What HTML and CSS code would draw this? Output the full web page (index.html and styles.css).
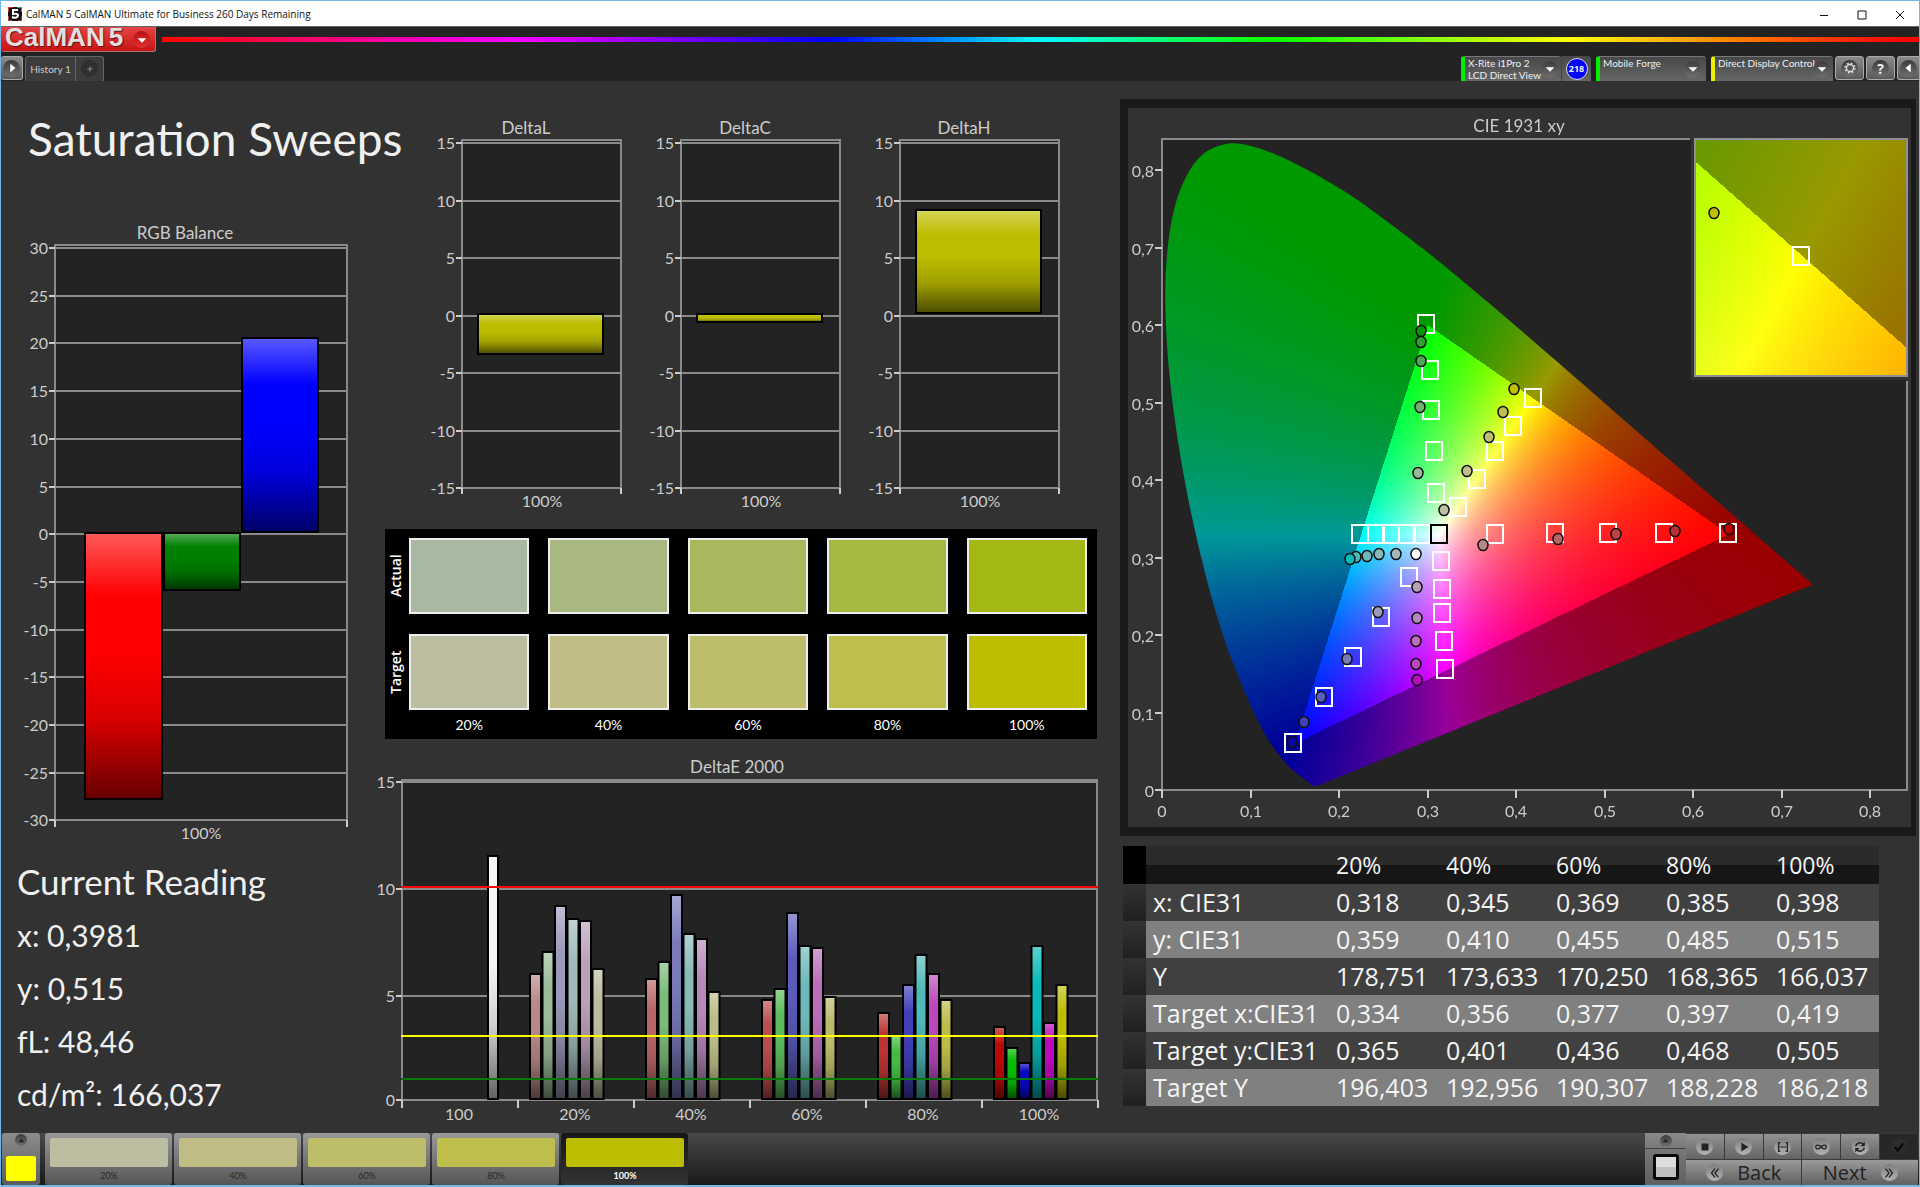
FILE: index.html
```
<!DOCTYPE html>
<html lang="en">
<head>
<meta charset="utf-8">
<title>CalMAN 5 CalMAN Ultimate for Business</title>
<link rel="stylesheet" href="styles.css">
</head>
<body>
<div class="window">
  <div class="titlebar">
    <svg class="app-icon" viewBox="0 0 14 14"><rect width="14" height="14" fill="#111"/><path d="M0 5V0h5" stroke="#c33" stroke-width="2" fill="none"/><path d="M0 9v5h4" stroke="#b44" stroke-width="2" fill="none"/><path d="M9 0h5v5" stroke="#3a5" stroke-width="2" fill="none"/><path d="M14 9v5h-4" stroke="#c22" stroke-width="2" fill="none"/><path d="M10 3H5v4c5-1 6 1 4 3-1 1-3 1-5 0" fill="none" stroke="#fff" stroke-width="2"/></svg>
    <span class="titlebar-text">CalMAN 5 CalMAN Ultimate for Business 260 Days Remaining</span>
    <div class="caption-buttons">
      <button aria-label="Minimize"><svg viewBox="0 0 12 12"><path d="M2 6.5h8"/></svg></button>
      <button aria-label="Maximize"><svg viewBox="0 0 12 12"><path d="M2 2h8v8H2z"/></svg></button>
      <button aria-label="Close"><svg viewBox="0 0 12 12"><path d="M2 2l8 8M10 2l-8 8"/></svg></button>
    </div>
  </div>

  <header class="header">
    <div class="brand-row">
      <button class="brand"><span>CalMAN</span><span>5</span><i class="knob knob-red"><svg viewBox="0 0 16 16"><path d="M3 6h10l-5 5z" fill="#fff"/></svg></i></button>
      <div class="rainbow"></div>
    </div>
    <div class="tab-row">
      <button class="key key-left" aria-label="Expand"><i class="knob"><svg viewBox="0 0 16 16"><path d="M6 3v10l6-5z" fill="#fff"/></svg></i></button>
      <nav class="tabs">
        <button class="tab">History 1</button>
        <button class="tab tab-add" aria-label="Add history"><i class="knob"><svg viewBox="0 0 16 16"><path d="M5 8h6M8 5v6" stroke="#999"/></svg></i></button>
      </nav>
      <div class="devices">
        <div class="device-group">
          <button class="device device-meter"><span>X-Rite i1Pro 2<br>LCD Direct View</span><i class="knob"><svg viewBox="0 0 16 16"><path d="M3 6h10l-5 5z" fill="#fff"/></svg></i></button>
          <div class="badge-cell"><span class="badge">218</span></div>
        </div>
        <button class="device device-source"><span>Mobile Forge</span><i class="knob"><svg viewBox="0 0 16 16"><path d="M3 6h10l-5 5z" fill="#fff"/></svg></i></button>
        <button class="device device-display"><span>Direct Display Control</span><i class="knob"><svg viewBox="0 0 16 16"><path d="M3 6h10l-5 5z" fill="#fff"/></svg></i></button>
        <div class="keys">
          <button class="key" aria-label="Settings"><i class="knob"><svg viewBox="0 0 16 16"><circle cx="8" cy="8" r="4" fill="none" stroke="#ddd" stroke-width="1.5"/><circle cx="8" cy="8" r="5.6" fill="none" stroke="#ddd" stroke-width="1.6" stroke-dasharray="2.2 2.2"/></svg></i></button>
          <button class="key key-help" aria-label="Help"><i class="knob">?</i></button>
          <button class="key key-right" aria-label="Collapse"><i class="knob"><svg viewBox="0 0 16 16"><path d="M10 3v10L4 8z" fill="#fff"/></svg></i></button>
        </div>
      </div>
    </div>
  </header>

  <main class="workspace">
    <section class="col-left">
      <h1>Saturation Sweeps</h1>
      <svg id="rgb-balance" class="chart" viewBox="1 225 369 629" role="img" aria-label="RGB Balance"></svg>
      <div class="reading">
        <h2>Current Reading</h2>
        <p>x: 0,3981</p>
        <p>y: 0,515</p>
        <p>fL: 48,46</p>
        <p>cd/m²: 166,037</p>
      </div>
    </section>

    <section class="col-mid">
      <svg id="delta-lch" class="chart" viewBox="370 81 740 448" role="img" aria-label="DeltaL, DeltaC and DeltaH"></svg>
      <div class="patches">
        <div class="sides"><span>Actual</span><span>Target</span></div>
        <div class="patch-grid">
          <b class="patch a20"></b><b class="patch a40"></b><b class="patch a60"></b><b class="patch a80"></b><b class="patch a100"></b>
          <b class="patch t20"></b><b class="patch t40"></b><b class="patch t60"></b><b class="patch t80"></b><b class="patch t100"></b>
        </div>
        <div class="levels"><span>20%</span><span>40%</span><span>60%</span><span>80%</span><span>100%</span></div>
      </div>
      <svg id="delta-e" class="chart" viewBox="370 739 740 394" role="img" aria-label="DeltaE 2000"></svg>
    </section>

    <section class="col-right">
      <figure class="cie">
        <canvas id="cie-colors" width="783" height="719"></canvas>
        <svg id="cie-plot" class="chart" viewBox="1128 108 783 719" role="img" aria-label="CIE 1931 xy"></svg>
      </figure>
      <table class="data">
        <thead><tr><th class="gutter"></th><th class="name"></th><th>20%</th><th>40%</th><th>60%</th><th>80%</th><th>100%</th></tr></thead>
        <tbody>
          <tr><td class="gutter"></td><td>x: CIE31</td><td>0,318</td><td>0,345</td><td>0,369</td><td>0,385</td><td>0,398</td></tr>
          <tr><td class="gutter"></td><td>y: CIE31</td><td>0,359</td><td>0,410</td><td>0,455</td><td>0,485</td><td>0,515</td></tr>
          <tr><td class="gutter"></td><td>Y</td><td>178,751</td><td>173,633</td><td>170,250</td><td>168,365</td><td>166,037</td></tr>
          <tr><td class="gutter"></td><td>Target x:CIE31</td><td>0,334</td><td>0,356</td><td>0,377</td><td>0,397</td><td>0,419</td></tr>
          <tr><td class="gutter"></td><td>Target y:CIE31</td><td>0,365</td><td>0,401</td><td>0,436</td><td>0,468</td><td>0,505</td></tr>
          <tr><td class="gutter"></td><td>Target Y</td><td>196,403</td><td>192,956</td><td>190,307</td><td>188,228</td><td>186,218</td></tr>
        </tbody>
      </table>
    </section>
  </main>

  <footer class="footer">
    <button class="current" aria-label="Current color"><i class="knob knob-small"><svg viewBox="0 0 16 16"><path d="M3 11h10L8 5z" fill="#222"/></svg></i><b></b></button>
    <div class="steps">
      <button class="step"><b class="t20"></b>20%</button>
      <button class="step"><b class="t40"></b>40%</button>
      <button class="step"><b class="t60"></b>60%</button>
      <button class="step"><b class="t80"></b>80%</button>
      <button class="step step-active"><b class="t100"></b>100%</button>
    </div>
    <div class="window-mode">
      <button aria-label="Show patterns"><i class="knob knob-small"><svg viewBox="0 0 16 16"><path d="M3 11h10L8 5z" fill="#222"/></svg></i></button>
      <button class="pattern" aria-label="Pattern"><b></b></button>
    </div>
    <div class="transport">
      <button aria-label="Stop"><i class="knob knob-light"><svg viewBox="0 0 16 16"><path d="M4 4h8v8H4z"/></svg></i></button>
      <button aria-label="Play"><i class="knob knob-light"><svg viewBox="0 0 16 16"><path d="M5 3v10l8-5z"/></svg></i></button>
      <button aria-label="Read series"><i class="knob knob-light"><svg viewBox="0 0 16 16"><path d="M5 3H3v10h2M11 3h2v10h-2M5 8h1.500M7.300 8h1.500M9.600 8h1.500" fill="none" stroke="#222" stroke-width="1.500"/></svg></i></button>
      <button aria-label="Read continuous"><i class="knob knob-light"><svg viewBox="0 0 16 16"><path d="M8 8C6 5.500 2 5 2 8S6 10.500 8 8s6-3 6 0S10 10.500 8 8z" fill="none" stroke="#222" stroke-width="1.500"/></svg></i></button>
      <button aria-label="Refresh"><i class="knob knob-light"><svg viewBox="0 0 16 16"><path d="M3 7c1-4 6-5 9-2M13 9c-1 4-6 5-9 2" fill="none" stroke="#222" stroke-width="1.800"/><path d="M13.500 2v5h-5zM2.500 14V9h5z"/></svg></i></button>
      <button class="off" aria-label="Accept"><i class="knob knob-dark"><svg viewBox="0 0 16 16"><path d="M3 8l3.500 4L13 4" fill="none" stroke="#0a0a0a" stroke-width="2.500"/></svg></i></button>
      <button class="step-nav"><i class="knob knob-light"><svg viewBox="0 0 16 16"><path d="M8 3L4 8l4 5M12 3L8 8l4 5" fill="none" stroke="#222" stroke-width="1.500"/></svg></i>Back</button>
      <button class="step-nav">Next<i class="knob knob-light"><svg viewBox="0 0 16 16"><path d="M4 3l4 5-4 5M8 3l4 5-4 5" fill="none" stroke="#222" stroke-width="1.500"/></svg></i></button>
    </div>
  </footer>
</div>
<script src="charts.js"></script>
</body>
</html>
```
FILE: styles.css
```
* { box-sizing: border-box; }

body {
  margin: 0;
  background: #323232;
  color: #f0f0f0;
  font-family: Lato, "Open Sans", sans-serif;
}

button {
  margin: 0;
  padding: 0;
  border: 0;
  background: none;
  color: inherit;
  font: inherit;
}

.window {
  display: flex;
  flex-direction: column;
  min-height: 100vh;
  border: 1px solid #6db9ea;
  border-bottom-width: 2px;
}

/* Title bar */
.titlebar {
  display: flex;
  align-items: center;
  gap: 4px;
  height: 25px;
  padding-left: 7px;
  background: #fff;
  color: #111;
  font: 10px/24px "Open Sans", sans-serif;
}
.app-icon { width: 14px; height: 14px; }
.caption-buttons { display: flex; margin-left: auto; }
.caption-buttons button { width: 38px; height: 25px; }
.caption-buttons svg { width: 12px; height: 12px; vertical-align: middle; fill: none; stroke: #111; }

/* Round button face shared by all glyph buttons */
.knob {
  display: inline-flex;
  align-items: center;
  justify-content: center;
  flex: none;
  width: 17px;
  height: 17px;
  border-radius: 50%;
  background: linear-gradient(#3c3c3c, #707070);
  font-style: normal;
}
.knob svg { width: 14px; height: 14px; }
.knob-red { background: linear-gradient(#b81212, #e03030); }
.knob-small { width: 12px; height: 12px; }
.knob-small svg { width: 9px; height: 9px; }
.knob-light { background: linear-gradient(#7c7c7c, #b4b4b4); fill: #222; }
.knob-dark { background: #2c2c2c; }

/* Header */
.header { background: #232323; }
.brand-row { display: flex; align-items: flex-start; gap: 6px; height: 30px; border-top: 1px solid #666; }
.brand {
  display: flex;
  align-items: center;
  gap: 4px;
  width: 155px;
  height: 25px;
  padding: 0 0 4px 4px;
  overflow: hidden;
  border: 1px solid #a77;
  border-width: 0 1px 1px 0;
  border-radius: 0 0 3px 3px;
  background: linear-gradient(#e34444, #c81414);
  color: #e0e0e0;
  font: bold 26px/20px "Liberation Sans", sans-serif;
  text-shadow: 1px 1px 1px #611;
}
.brand .knob { margin: 5px 0 0 6px; }
.rainbow {
  flex: 1;
  height: 5px;
  margin-top: 10px;
  background: linear-gradient(90deg, #f00, #f0f 20%, #00f 38%, #0ff 50%, #0f0 63%, #ff0 80%, #f00 99%);
}
.tab-row { display: flex; height: 25px; }
.tabs { display: flex; margin-left: 2px; border: 1px solid #666; border-bottom: 0; border-radius: 3px 3px 0 0; background: #3c3c3c; }
.tab { width: 49px; color: #ccc; font-size: 10px; }
.tab-add { width: 28px; border-left: 1px solid #666; }
.tab-add .knob { background: #303030; }
.key {
  display: flex;
  align-items: center;
  justify-content: center;
  width: 29px;
  height: 24px;
  border: 1px solid #aaa;
  border-radius: 3px;
  background: linear-gradient(#8a8a8a, #5a5a5a);
}
.key-left { width: 22px; border-left: 0; }
.key-right { width: 22px; border-right: 0; border-radius: 3px 0 0 3px; }
.key-help { font: bold 14px "Open Sans", sans-serif; }
.devices { display: flex; gap: 5px; margin-left: auto; }
.device-group { display: flex; }
.device {
  display: flex;
  align-items: center;
  justify-content: space-between;
  height: 25px;
  padding: 0 5px 0 3px;
  border-left: 4px solid #0e0;
  border-top: 1px solid #777;
  border-radius: 3px 3px 0 0;
  background: linear-gradient(#484848, #666);
  font-size: 10px;
  line-height: 12px;
  text-align: left;
  white-space: nowrap;
}
.device span { align-self: flex-start; }
.device-meter { width: 100px; padding-right: 6px; }
.device-source { width: 110px; }
.device-display { width: 122px; padding-right: 3px; border-left-color: #ee0; }
.device-display .knob { margin-left: -6px; }
.badge-cell { display: flex; align-items: center; justify-content: center; width: 30px; border-left: 1px solid #444; background: linear-gradient(#484848, #666); border-radius: 0 3px 0 0; }
.badge { width: 22px; height: 22px; border: 1px solid #ddd; border-radius: 50%; background: #00f; font: bold 9px/20px "Open Sans", sans-serif; text-align: center; }
.keys { display: flex; gap: 2px; margin-left: -3px; }

/* Workspace */
.workspace {
  display: grid;
  grid-template-columns: minmax(0, 369fr) minmax(0, 740fr) minmax(0, 809fr);
  flex: 1;
  align-items: start;
}
.chart { display: block; width: 100%; height: auto; font: 16px Lato, sans-serif; fill: #ccc; }
.chart .chart-title { font-size: 17px; }
.chart .end { text-anchor: end; }
.chart .mid { text-anchor: middle; }

h1 { margin: 26px 0 54px 27px; font-size: 46px; font-weight: 400; line-height: 64px; white-space: nowrap; }
.reading { padding-left: 16px; }
.reading h2, .reading p { margin: 0; font-weight: 400; }
.reading h2 { font-size: 35px; line-height: 55px; }
.reading p { font-size: 30px; line-height: 53px; }

.patches {
  display: grid;
  grid-template-columns: 20px minmax(0, 1fr);
  height: 210px;
  margin: 0 13px 0 15px;
  padding: 9px 10px 0 4px;
  background: #000;
  color: #fff;
}
.patch-grid, .sides { display: grid; grid-template-rows: 76px 76px; row-gap: 20px; }
.patch-grid, .levels { grid-column: 2; display: grid; grid-template-columns: repeat(5, minmax(0, 1fr)); column-gap: 19px; }
.sides span { width: 14px; writing-mode: vertical-rl; transform: rotate(180deg); text-align: center; font: 600 14px/14px "Open Sans", sans-serif; }
.levels { text-align: center; font-size: 14px; line-height: 24px; }
.patch { border: 2px solid #eee; }
.a20 { background: #a9b8a3; } .a40 { background: #a9b880; } .a60 { background: #a8b85c; } .a80 { background: #a6b83f; } .a100 { background: #a3b715; }
.t20 { background: #bdbda2; } .t40 { background: #bfbd85; } .t60 { background: #bebd6a; } .t80 { background: #bdbe4b; } .t100 { background: #bdbd00; }

.cie {
  display: grid;
  margin: 18px 3px 10px 10px;
  border: solid #1a1a1a;
  border-width: 9px 5px 9px 8px;
}
.cie > * { grid-area: 1 / 1; width: 100%; }

.data { width: 756px; max-width: 98%; margin-left: 13px; border-collapse: collapse; table-layout: fixed; color: #f4f4f4; font: 25px/36px "Open Sans", sans-serif; }
.data th, .data td { height: 37px; padding: 0 0 1px 7px; text-align: left; font-weight: 400; white-space: nowrap; }
.data th { height: 38px; font-size: 23px; }
.data thead tr { background: linear-gradient(#2b2b2b 50%, #161616 50%); }
.data tbody tr { background: #404040; }
.data tbody tr:nth-child(even) { background: #808080; }
.data .gutter { width: 23px; background: linear-gradient(#333, #202020); }
.data th.gutter { background: #000; }
.data .name { width: 183px; }

/* Footer */
.footer { display: flex; height: 52px; padding: 0 1px; background: linear-gradient(#484848, #1a1a1a); }
.current {
  display: flex;
  flex-direction: column;
  align-items: center;
  justify-content: space-between;
  width: 38px;
  padding: 1px 0 4px;
  border-radius: 3px;
  background: linear-gradient(#8c8c8c, #5c5c5c);
}
.current b { width: 30px; height: 25px; border-radius: 2px; background: #ff0; }
.steps { display: flex; gap: 2px; margin-left: 5px; }
.step {
  display: flex;
  flex-direction: column;
  width: 127px;
  padding: 5px 4px 0 5px;
  border-radius: 3px;
  background: linear-gradient(#999, #555);
  color: #2a2a2a;
  font-size: 9px;
  line-height: 18px;
}
.step b { height: 30px; border-radius: 2px; }
.step-active { background: linear-gradient(#161616, #333); color: #fff; font-weight: 700; }
.window-mode { display: flex; flex-direction: column; gap: 1px; width: 41px; margin-left: auto; background: #444; }
.window-mode button { display: flex; align-items: center; justify-content: center; height: 15px; background: linear-gradient(#8a8a8a, #787878); }
.window-mode .pattern { height: 36px; background: linear-gradient(#777, #606060); }
.pattern b { width: 26px; height: 26px; border: 3px solid #0a0a0a; border-radius: 3px; background: linear-gradient(#ddd 50%, #c0c0c0 50%); }
.transport { display: grid; grid-template-columns: repeat(6, 1fr); grid-template-rows: 25px 25px; gap: 1px; width: 232px; padding-top: 1px; background: #3a3a3a; }
.transport button { display: flex; align-items: center; justify-content: center; background: linear-gradient(#939393, #646464); }
.transport .off { background: #272727; }
.transport .step-nav { grid-column: span 3; gap: 14px; color: #222; font: 20px/24px "Open Sans", sans-serif; background: linear-gradient(#9a9a9a, #606060); }
```
FILE: charts.js
```
// Bar charts ---------------------------------------------------------------

const GLOSS = `<defs><linearGradient id="gloss" x1="0" y1="0" x2="0" y2="1">
  <stop offset="0" stop-color="#fff" stop-opacity=".35"/><stop offset=".24" stop-color="#fff" stop-opacity="0"/>
  <stop offset=".45" stop-color="#000" stop-opacity="0"/><stop offset=".7" stop-color="#000" stop-opacity=".15"/>
  <stop offset="1" stop-color="#000" stop-opacity=".6"/></linearGradient></defs>`;

const text = (x, y, s, cls) => `<text x="${x}" y="${y}" class="${cls}">${s}</text>`;
const line = (x1, y1, x2, y2, color, w = 2) =>
  `<path d="M${x1} ${y1}L${x2} ${y2}" stroke="${color}" stroke-width="${w}"/>`;
const rect = (x, y, w, h, attrs) => `<rect x="${x}" y="${y}" width="${w}" height="${h}" ${attrs}/>`;

function bar(x, y, w, h, color) {
  return rect(x, y, w, h, `fill="${color}"`) + rect(x, y, w, h, 'fill="url(#gloss)" stroke="#000" stroke-width="2"');
}

// Plot box with horizontal grid lines and value labels on the left.
function frame(left, right, top, bottom, rows) {
  let out = rect(left, top, right - left, bottom - top, 'fill="#232323" stroke="#8a8a8a" stroke-width="2"');
  rows.forEach(([value, y]) => {
    out += line(left, y, right, y, '#8a8a8a') + line(left - 6, y, left, y, '#ccc');
    out += text(left - 7, y + 6, value, 'end');
  });
  return out;
}

const scale = (max, min, step, y0, dy) => {
  const rows = [];
  for (let v = max, i = 0; v >= min; v -= step, i++) rows.push([v, Math.round(y0 + i * dy)]);
  return rows;
};

document.getElementById('rgb-balance').innerHTML = GLOSS +
  frame(55, 347, 245, 820, scale(30, -30, 5, 248, 47.7)) +
  line(55, 820, 55, 827, '#ccc') + line(347, 820, 347, 827, '#ccc') +
  bar(85, 533, 77, 266, '#f00') + bar(164, 533, 76, 57, '#008000') + bar(242, 338, 76, 194, '#00f') +
  text(185, 239, 'RGB Balance', 'mid chart-title') + text(201, 839, '100%', 'mid');

document.getElementById('delta-lch').innerHTML =
  [['DeltaL', 462, 314, 40], ['DeltaC', 681, 314, 8], ['DeltaH', 900, 210, 103]].map(([name, x, y, h]) =>
    frame(x, x + 159, 140, 488, scale(15, -15, 5, 143, 57.5)) +
    line(x, 488, x, 494, '#ccc') + line(x + 159, 488, x + 159, 494, '#ccc') +
    bar(x + 16, y, 125, h, '#bdbd00') +
    text(x + 64, 134, name, 'mid chart-title') + text(x + 80, 507, '100%', 'mid')).join('');

const SERIES = [
  { label: '20%', tops: [974, 952, 906, 919, 921, 969], colors: ['#b98888', '#9abb98', '#9a9abb', '#a0baba', '#bba0bb', '#bbbb9f'] },
  { label: '40%', tops: [979, 962, 895, 934, 939, 992], colors: ['#bb6666', '#7aba7a', '#7a7abb', '#88bab8', '#b888bb', '#bcbb86'] },
  { label: '60%', tops: [1000, 989, 913, 946, 948, 997], colors: ['#bb4d4d', '#5cbb5c', '#5c5cbb', '#6fbab8', '#bb6cbb', '#bcbb6c'] },
  { label: '80%', tops: [1013, 1036, 985, 955, 974, 1000], colors: ['#bb3333', '#44bb44', '#4040bb', '#50bab8', '#bb48bb', '#bcbb4a'] },
  { label: '100%', tops: [1027, 1048, 1063, 946, 1023, 985], colors: ['#bb0808', '#08bb08', '#0808bb', '#08bab8', '#bb08bb', '#bcbb08'] }
];

let deltaE = frame(402, 1097, 780, 1100, [[15, 782], [10, 889], [5, 996], [0, 1100]]);
deltaE += bar(488, 856, 10, 243, '#f4f4f4');
SERIES.forEach((s, g) => {
  s.tops.forEach((top, i) => { deltaE += bar(530 + g * 116 + i * 12.5, top, 11, 1099 - top, s.colors[i]); });
  deltaE += text(575 + g * 116, 1120, s.label, 'mid');
});
for (let i = 0; i <= 6; i++) deltaE += line(402 + i * 116, 1100, 402 + i * 116, 1108, '#ccc');
deltaE += text(459, 1120, '100', 'mid') + text(737, 773, 'DeltaE 2000', 'mid chart-title');
deltaE += line(401, 887, 1098, 887, '#f00') + line(401, 1036, 1098, 1036, '#ff0') + line(401, 1079, 1098, 1079, '#007a00');
document.getElementById('delta-e').innerHTML = deltaE;

// CIE 1931 chromaticity diagram --------------------------------------------

const px = x => 1162 + 885.6 * x;
const py = y => 790 - 775 * y;

const LOCUS = [
  [.1741, .005], [.1714, .0051], [.1689, .0069], [.1644, .0109], [.1566, .0177], [.144, .0297], [.1241, .0578],
  [.1096, .0868], [.0913, .1327], [.0687, .2007], [.0454, .295], [.0235, .4127], [.0082, .5384], [.0039, .6548],
  [.0139, .7502], [.0389, .812], [.0743, .8338], [.1142, .8262], [.1547, .8059], [.1929, .7816], [.2296, .7543],
  [.3016, .6923], [.3731, .6245], [.4441, .5547], [.5125, .4866], [.5752, .4242], [.627, .3725], [.6658, .334],
  [.6915, .3083], [.719, .2809], [.7347, .2653]
];

const CMF = [[3.2406, -1.5372, -.4986], [-.9689, 1.8758, .0415], [.0557, -.204, 1.057]];

// Brightest displayable color at (x, y); dimmed when outside Rec.709.
function chroma(x, y) {
  const X = x / y, Z = (1 - x - y) / y;
  const lin = CMF.map(r => r[0] * X + r[1] + r[2] * Z);
  const dim = Math.min(...lin) < 0 ? 153 : 255;
  const max = Math.max(...lin);
  return lin.map(c => Math.round(dim * Math.max(0, c) / max));
}

function shade(w, h, toXY) {
  const layer = document.createElement('canvas');
  layer.width = w;
  layer.height = h;
  const c = layer.getContext('2d');
  const img = c.createImageData(w, h);
  for (let j = 0, k = 0; j < h; j++) {
    for (let i = 0; i < w; i++, k += 4) {
      const [x, y] = toXY(i + .5, j + .5);
      const rgb = chroma(x, Math.max(y, .001));
      img.data[k] = rgb[0];
      img.data[k + 1] = rgb[1];
      img.data[k + 2] = rgb[2];
      img.data[k + 3] = 255;
    }
  }
  c.putImageData(img, 0, 0);
  return layer;
}

const ctx = document.getElementById('cie-colors').getContext('2d');
ctx.fillStyle = '#323232';
ctx.fillRect(0, 0, 783, 719);
ctx.translate(-1128, -108);
ctx.fillStyle = '#232323';
ctx.fillRect(1162, 139, 745, 651);
ctx.save();
ctx.beginPath();
const P = LOCUS.map(([x, y]) => [px(x), py(y)]);
ctx.moveTo(...P[0]);
for (let i = 0; i < P.length - 1; i++) {
  const a = P[Math.max(i - 1, 0)], b = P[i], c = P[i + 1], d = P[Math.min(i + 2, P.length - 1)];
  ctx.bezierCurveTo(b[0] + (c[0] - a[0]) / 6, b[1] + (c[1] - a[1]) / 6, c[0] - (d[0] - b[0]) / 6, c[1] - (d[1] - b[1]) / 6, c[0], c[1]);
}
ctx.closePath();
ctx.clip();
ctx.drawImage(shade(745, 651, (i, j) => [i / 885.6, (651 - j) / 775]), 1162, 139);
ctx.restore();
ctx.fillStyle = '#323232';
ctx.fillRect(1691, 136, 220, 244);
ctx.drawImage(shade(212, 237, (i, j) => [.419 + (i - 106) / 4100, .505 - (j - 118) / 4550]), 1695, 139);

const TARGETS = [
  [1426, 324], [1430, 370], [1431, 410], [1434, 451], [1436, 493],
  [1533, 398], [1513, 426], [1495, 451], [1477, 479], [1458, 507],
  [1495, 534], [1555, 533], [1608, 533], [1664, 533], [1728, 533],
  [1360, 534], [1376, 534], [1391, 534], [1407, 534], [1422, 534],
  [1441, 561], [1442, 589], [1442, 613], [1444, 641], [1445, 669],
  [1409, 577], [1381, 617], [1353, 657], [1324, 697], [1293, 743],
  [1801, 256]
];
const MEASURED = [
  [1421, 331, '#009900'], [1421, 342, '#30a030'], [1421, 361, '#50a850'], [1420, 407, '#70b070'], [1418, 473, '#9ab89a'],
  [1514, 389, '#c0c000'], [1503, 412, '#c0be50'], [1489, 437, '#bfbd70'], [1467, 471, '#c0bd88'], [1444, 510, '#bfbfa5'],
  [1483, 545, '#b98888'], [1558, 539, '#bb6666'], [1616, 534, '#bb4444'], [1675, 531, '#bb3030'], [1729, 529, '#c00000'],
  [1416, 554, '#ffffff'], [1396, 554, '#a0baba'], [1379, 554, '#88bab8'], [1367, 556, '#6fbab8'], [1356, 557, '#50bab8'], [1350, 559, '#08bab8'],
  [1417, 587, '#bba0bb'], [1417, 618, '#b888bb'], [1416, 641, '#bb6cbb'], [1416, 664, '#bb48bb'], [1417, 680, '#bb08bb'],
  [1378, 612, '#9a9abb'], [1347, 659, '#7a7abb'], [1321, 697, '#5c5cbb'], [1304, 722, '#4040bb'], [1292, 742, '#0808a0'],
  [1714, 213, '#c0c000']
];

let cie = text(1519, 132, 'CIE 1931 xy', 'mid chart-title');
cie += '<path d="M1162 790V139H1690M1907 381V790" fill="none" stroke="#8a8a8a" stroke-width="2"/>';
cie += line(1161, 790, 1908, 790, '#8a8a8a');
cie += rect(1695, 139, 212, 237, 'fill="none" stroke="#909090" stroke-width="2"');
for (let i = 0; i <= 8; i++) {
  const label = i ? '0,' + i : '0';
  const x = Math.round(px(i / 10)), y = Math.round(py(i / 10));
  cie += line(x, 790, x, 798, '#ccc') + text(x, 817, label, 'mid');
  cie += line(1155, y, 1162, y, '#ccc') + text(1154, y + 7, label, 'end');
}
const box = ([x, y], color) => rect(x - 8, y - 9, 16, 18, `fill="none" stroke="${color}" stroke-width="2"`);
TARGETS.forEach(t => { cie += box(t, '#fff'); });
cie += box([1439, 534], '#000');
MEASURED.forEach(([x, y, c]) => {
  cie += `<ellipse cx="${x}" cy="${y}" rx="5" ry="5.5" fill="${c}" stroke="#111" stroke-width="1.5"/>`;
});
document.getElementById('cie-plot').innerHTML = cie;
```
